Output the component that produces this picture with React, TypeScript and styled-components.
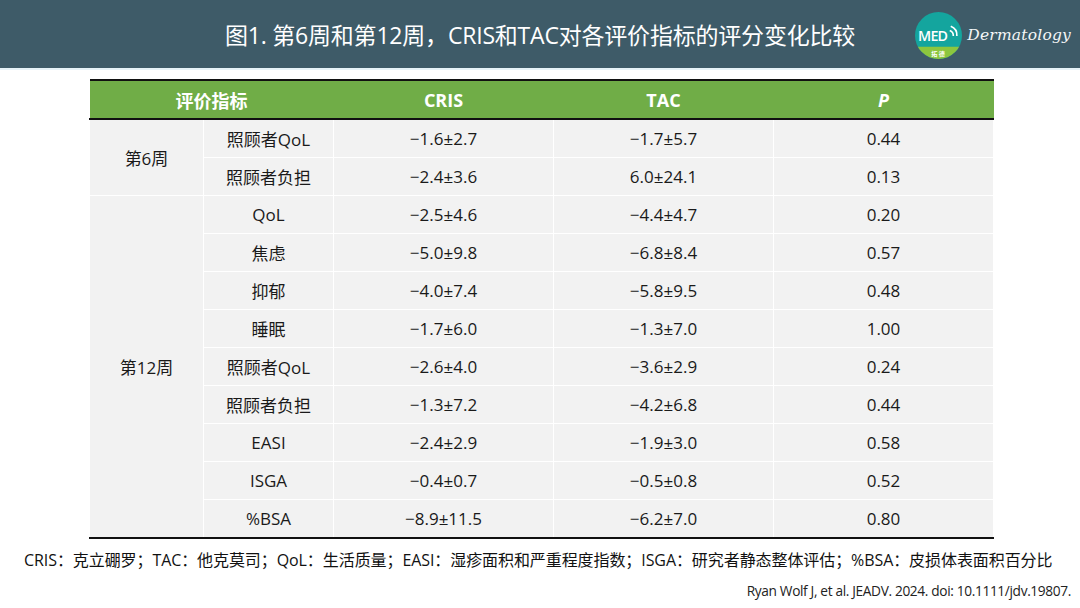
import styled, { createGlobalStyle } from "styled-components";

const GlobalStyle = createGlobalStyle`
  html, body {
    margin: 0;
    padding: 0;
    background: #ffffff;
  }
  body {
    font-family: "Open Sans", "Noto Sans CJK SC", sans-serif;
  }
`;

const Page = styled.div`
  width: 1080px;
  height: 608px;
  overflow: hidden;
  background: #ffffff;
  display: flex;
  flex-direction: column;
`;

const Header = styled.header`
  height: 68px;
  background: #3e5b68;
  border-bottom: 2px solid #e6f3f8;
  display: grid;
  grid-template-columns: 1fr auto 1fr;
  align-items: center;
`;

const Title = styled.h1`
  grid-column: 2;
  margin: 0;
  color: #ffffff;
  font-size: 23px;
  font-weight: 400;
  letter-spacing: -0.2px;
  font-family: "Open Sans", "Noto Sans CJK SC", sans-serif;
`;

const Brand = styled.div`
  grid-column: 3;
  justify-self: end;
  display: flex;
  align-items: center;
  gap: 5px;
  padding-right: 9px;
  margin-top: 2px;
`;

const BrandName = styled.span`
  color: #f4f6f7;
  font-family: "DejaVu Serif", "Liberation Serif", serif;
  font-style: italic;
  font-size: 15.5px;
  letter-spacing: 0.2px;
`;

const Main = styled.main`
  padding: 9px 0 0 89px;
`;

const Table = styled.table`
  width: 904px;
  border-collapse: collapse;
  table-layout: fixed;
  border-top: 2px solid #111;
  border-bottom: 2px solid #111;
  font-size: 17px;
  color: #1a1a1a;
`;

const HeadCell = styled.th<{ $italic?: boolean }>`
  height: 37px;
  padding: 0;
  background: #70ad47;
  color: #ffffff;
  font-weight: 700;
  font-size: 18px;
  font-style: ${({ $italic }) => ($italic ? "italic" : "normal")};
  text-align: center;
  border-bottom: 2px solid #111;
`;

const Row = styled.tr<{ $split?: boolean }>`
  border-top: ${({ $split }) => ($split ? "1px solid #4a4a4a" : "none")};
`;

const Cell = styled.td`
  height: 37px;
  padding: 0;
  background: #f2f2f2;
  text-align: center;
  border-left: 1px solid #ffffff;
  border-right: 1px solid #ffffff;
  border-top: 1px solid #ffffff;
  white-space: nowrap;
`;

const Foot = styled.p`
  margin: 8px 0 0 24px;
  font-size: 16px;
  letter-spacing: -0.08px;
  color: #111;
  white-space: nowrap;
  font-family: "Open Sans", "Noto Sans CJK SC", sans-serif;
`;

const Cite = styled.p`
  margin: 10px 9px 0 0;
  text-align: right;
  font-size: 13.7px;
  letter-spacing: -0.35px;
  color: #222;
`;

const Logo = () => (
  <svg width="47" height="47" viewBox="0 0 46 46">
    <defs>
      <clipPath id="lc">
        <circle cx="23" cy="23" r="23" />
      </clipPath>
    </defs>
    <g clipPath="url(#lc)">
      <rect width="46" height="46" fill="#14a59e" />
      <rect y="34" width="46" height="12" fill="#8cc63e" />
    </g>
    <text x="3" y="28.5" fill="#fff" fontFamily="Open Sans, sans-serif" fontSize="14" fontWeight="600" letterSpacing="-0.8">
      MED
    </text>
    <path d="M34 18 a5.5 5.5 0 0 1 3.5 5.5" stroke="#fff" strokeWidth="1.6" fill="none" />
    <path d="M35 14 a9.5 9.5 0 0 1 6 9.5" stroke="#fff" strokeWidth="1.6" fill="none" />
    <text x="16" y="43" fill="#fff" fontFamily="Noto Sans CJK SC, sans-serif" fontSize="6" fontWeight="700">
      拓 德
    </text>
  </svg>
);

type Item = { name: string; cris: string; tac: string; p: string };

const week6: Item[] = [
  { name: "照顾者QoL", cris: "−1.6±2.7", tac: "−1.7±5.7", p: "0.44" },
  { name: "照顾者负担", cris: "−2.4±3.6", tac: "6.0±24.1", p: "0.13" },
];

const week12: Item[] = [
  { name: "QoL", cris: "−2.5±4.6", tac: "−4.4±4.7", p: "0.20" },
  { name: "焦虑", cris: "−5.0±9.8", tac: "−6.8±8.4", p: "0.57" },
  { name: "抑郁", cris: "−4.0±7.4", tac: "−5.8±9.5", p: "0.48" },
  { name: "睡眠", cris: "−1.7±6.0", tac: "−1.3±7.0", p: "1.00" },
  { name: "照顾者QoL", cris: "−2.6±4.0", tac: "−3.6±2.9", p: "0.24" },
  { name: "照顾者负担", cris: "−1.3±7.2", tac: "−4.2±6.8", p: "0.44" },
  { name: "EASI", cris: "−2.4±2.9", tac: "−1.9±3.0", p: "0.58" },
  { name: "ISGA", cris: "−0.4±0.7", tac: "−0.5±0.8", p: "0.52" },
  { name: "%BSA", cris: "−8.9±11.5", tac: "−6.2±7.0", p: "0.80" },
];

const Group = ({ label, items, split }: { label: string; items: Item[]; split?: boolean }) => (
  <>
    {items.map((it, i) => (
      <Row key={it.name} $split={split && i === 0}>
        {i === 0 && <Cell rowSpan={items.length}>{label}</Cell>}
        <Cell>{it.name}</Cell>
        <Cell>{it.cris}</Cell>
        <Cell>{it.tac}</Cell>
        <Cell>{it.p}</Cell>
      </Row>
    ))}
  </>
);

const App = () => {
  return (
    <Page>
      <GlobalStyle />
      <Header>
        <Title>图1. 第6周和第12周，CRIS和TAC对各评价指标的评分变化比较</Title>
        <Brand>
          <Logo />
          <BrandName>Dermatology</BrandName>
        </Brand>
      </Header>
      <Main>
        <Table>
          <colgroup>
            <col style={{ width: 114 }} />
            <col style={{ width: 130 }} />
            <col style={{ width: 220 }} />
            <col style={{ width: 220 }} />
            <col style={{ width: 220 }} />
          </colgroup>
          <thead>
            <tr>
              <HeadCell colSpan={2}>评价指标</HeadCell>
              <HeadCell>CRIS</HeadCell>
              <HeadCell>TAC</HeadCell>
              <HeadCell $italic>P</HeadCell>
            </tr>
          </thead>
          <tbody>
            <Group label="第6周" items={week6} />
            <Group label="第12周" items={week12} split />
          </tbody>
        </Table>
      </Main>
      <Foot>
        CRIS：克立硼罗；TAC：他克莫司；QoL：生活质量；EASI：湿疹面积和严重程度指数；ISGA：研究者静态整体评估；%BSA：皮损体表面积百分比
      </Foot>
      <Cite>Ryan Wolf J, et al. JEADV. 2024. doi: 10.1111/jdv.19807.</Cite>
    </Page>
  );
};

export default App;
